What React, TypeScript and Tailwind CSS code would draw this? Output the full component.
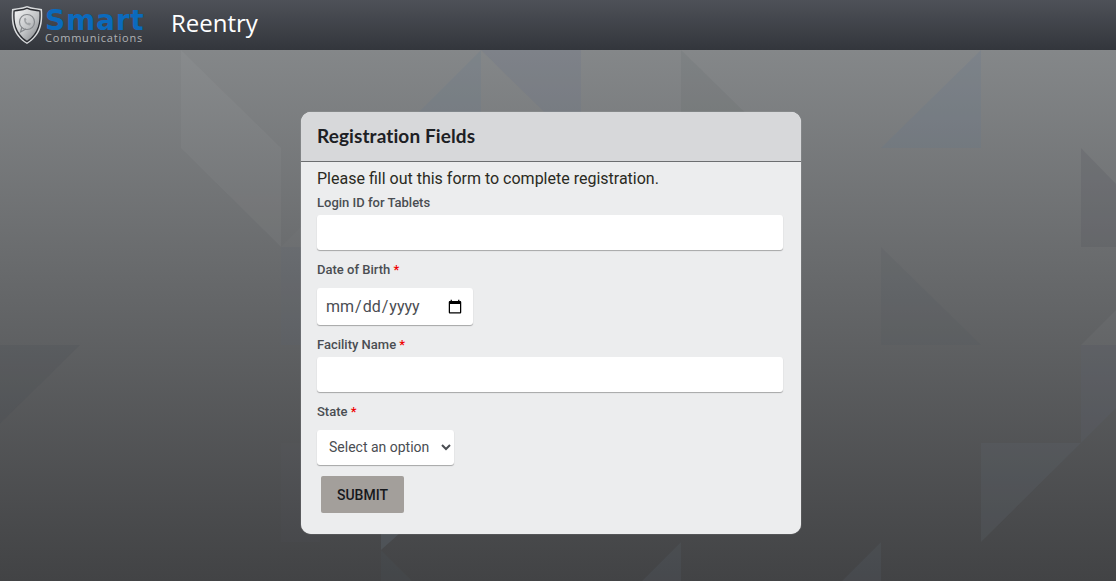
const triangles = [
  { points: '181,50 281,148 281,247 181,148', fill: '#ffffff', opacity: 0.035 },
  { points: '281,247 320,208 320,247', fill: '#ffffff', opacity: 0.015 },
  { points: '281,247 320,247 320,345 281,345', fill: '#5f6b7c', opacity: 0.08 },
  { points: '281,443 320,443 320,542 281,542', fill: '#5f6b7c', opacity: 0.06 },
  { points: '-20,345 80,345 -20,443', fill: '#3f4a50', opacity: 0.14 },
  { points: '481,50 481,148 383,148', fill: '#66788c', opacity: 0.2 },
  { points: '481,50 581,50 581,148', fill: '#6a7388', opacity: 0.22 },
  { points: '681,50 681,148 781,148', fill: '#50545c', opacity: 0.1 },
  { points: '981,50 981,148 881,148', fill: '#66788c', opacity: 0.22 },
  { points: '1081,148 1081,247 1116,247 1116,184', fill: '#4f525c', opacity: 0.2 },
  { points: '881,247 881,345 981,345', fill: '#465058', opacity: 0.12 },
  { points: '1116,310 1081,345 1116,345', fill: '#ffffff', opacity: 0.035 },
  { points: '1081,345 1116,345 1116,408 1081,443', fill: '#5f6472', opacity: 0.2 },
  { points: '981,443 1081,443 981,542', fill: '#5f6a72', opacity: 0.22 },
  { points: '881,542 881,581 842,581', fill: '#5f6a72', opacity: 0.18 },
  { points: '681,542 681,581 642,581', fill: '#5f6a72', opacity: 0.18 },
  { points: '381,550 400,533 381,533', fill: '#5f6a72', opacity: 0.35 },
  { points: '381,550 381,581 412,581', fill: '#4f5f6a', opacity: 0.12 },
];

function Background() {
  return (
    <svg className="absolute inset-0 h-full w-full" viewBox="0 0 1116 581" preserveAspectRatio="none">
      {triangles.map((t) => (
        <polygon key={t.points} points={t.points} fill={t.fill} fillOpacity={t.opacity} />
      ))}
    </svg>
  );
}

function ShieldLogo() {
  return (
    <svg width="32" height="40" viewBox="0 0 32 40" className="shrink-0">
      <defs>
        <linearGradient id="silver" x1="0" y1="0" x2="1" y2="1">
          <stop offset="0" stopColor="#f4f5f6" />
          <stop offset="0.55" stopColor="#c2c4c6" />
          <stop offset="1" stopColor="#7c7f83" />
        </linearGradient>
      </defs>
      <path d="M16 1 C22 3 27 3 31 4 C32 17 31 30 16 39 C1 30 0 17 1 4 C5 3 10 3 16 1 Z" fill="#d9dbdd" />
      <path d="M16 2.5 C21 4.5 26 4.5 29.6 5.4 C30.4 17 29 29 16 37.4 C3 29 1.6 17 2.4 5.4 C6 4.5 11 4.5 16 2.5 Z" fill="#2c2e33" />
      <path d="M16 4 C21 6 25 6 28.3 6.6 C29 17 27.6 28 16 35.8 C4.4 28 3 17 3.7 6.6 C7 6 11 6 16 4 Z" fill="url(#silver)" />
      <circle cx="16" cy="17" r="7.5" fill="none" stroke="#85888c" strokeWidth="1.2" />
      <path d="M11 22 L9.5 27 L15 24" fill="none" stroke="#85888c" strokeWidth="1.2" />
      <path d="M13 13.5 C13 18 15 20 19 20.5 L20 18.5 L17.8 17.4 L16.8 18.2 C15.8 17.6 15 16.6 14.7 15.7 L15.5 14.8 L14.6 12.7 Z" fill="#a0a3a6" />
    </svg>
  );
}

function Label({ text, required }: { text: string; required?: boolean }) {
  return (
    <label className="block text-[13px] font-medium leading-[18px] text-[#4a4d52]">
      {text}
      {required && <span className="text-[#f00000]"> *</span>}
    </label>
  );
}

const fieldClass =
  'block h-[35px] rounded-[3px] bg-white text-[#4a4d52] shadow-[0_1px_1px_rgba(0,0,0,0.3)] outline-none';

export default function App() {
  return (
    <div className="relative h-screen overflow-hidden bg-gradient-to-b from-[#8b8e90] to-[#424345] font-['Roboto',sans-serif]">
      <Background />
      <header className="relative flex h-[50px] items-center bg-gradient-to-b from-[#4e5158] to-[#33363c] pl-[11px]">
        <ShieldLogo />
        <div className="ml-[2px] flex w-[100px] flex-col self-start pt-[9px] font-['Open_Sans',sans-serif]">
          <span className="h-[22px] font-['DejaVu_Sans',sans-serif] text-[28px] font-bold leading-[24px] tracking-[0.8px] text-[#0b6abd]">
            Smart
          </span>
          <span className="h-[13px] text-[11px] leading-[13px] tracking-[0.8px] text-[#b0b2b5]">
            Communications
          </span>
        </div>
        <h1 className="mb-[4px] ml-[26px] font-['Open_Sans',sans-serif] text-[24px] leading-none text-white">Reentry</h1>
      </header>

      <main className="relative ml-[301px] mt-[62px] h-[422px] w-[500px] overflow-hidden rounded-[10px] bg-[#ecedee] shadow-[0_0_1px_rgba(255,255,255,0.8)]">
        <div className="flex h-[50px] items-center border-b border-[#6c6e70] bg-[#d7d8da] px-4 pb-[2px]">
          <h2 className="font-['Lato',sans-serif] text-[19px] font-bold leading-none tracking-[0.1px] text-[#1d2024]">
            Registration Fields
          </h2>
        </div>
        <form className="px-4 pt-[7px]">
          <p className="text-base leading-[19px] text-[#2a2a22]">Please fill out this form to complete registration.</p>
          <div className="mt-[6px]">
            <Label text="Login ID for Tablets" />
            <input type="text" className={`${fieldClass} mt-[3px] w-[466px] px-3`} />
          </div>
          <div className="mt-[11px]">
            <Label text="Date of Birth" required />
            <input type="date" className={`${fieldClass} mt-[9px] h-[37px] w-[156px] px-[8px] text-base`} />
          </div>
          <div className="mt-[11px]">
            <Label text="Facility Name" required />
            <input type="text" className={`${fieldClass} mt-[3px] w-[466px] px-3`} />
          </div>
          <div className="mt-[11px]">
            <Label text="State" required />
            <select className={`${fieldClass} mt-[9px] w-[137px] pb-[2px] pl-2 text-sm`}>
              <option>Select an option</option>
            </select>
          </div>
          <button
            type="button"
            className="ml-1 mt-[11px] h-[37px] w-[83px] rounded-[2px] bg-[#a39f9b] text-sm font-medium text-[#16181c]"
          >
            SUBMIT
          </button>
        </form>
      </main>
    </div>
  );
}
